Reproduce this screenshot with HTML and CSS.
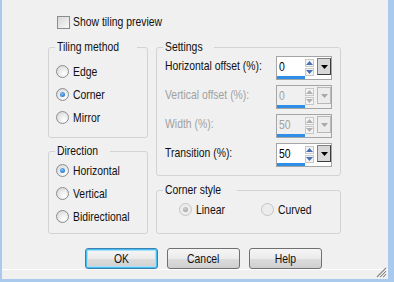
FILE: index.html
```html
<!DOCTYPE html>
<html>
<head>
<meta charset="utf-8">
<link rel="stylesheet" href="styles.css">
</head>
<body>
<div class="win">
  <div class="content">
    <div class="check"><span class="cbox"></span><span class="t">Show tiling preview</span></div>
    <div class="cols">
      <div class="left">
        <div class="group g-tiling">
          <div class="legend"><span class="t">Tiling method</span></div>
          <div class="radios r-tiling">
            <div class="radio"><span class="rb"></span><span class="t">Edge</span></div>
            <div class="radio"><span class="rb on"></span><span class="t">Corner</span></div>
            <div class="radio"><span class="rb"></span><span class="t">Mirror</span></div>
          </div>
        </div>
        <div class="group g-dir">
          <div class="legend"><span class="t">Direction</span></div>
          <div class="radios r-dir">
            <div class="radio"><span class="rb on"></span><span class="t">Horizontal</span></div>
            <div class="radio"><span class="rb"></span><span class="t">Vertical</span></div>
            <div class="radio"><span class="rb"></span><span class="t">Bidirectional</span></div>
          </div>
        </div>
      </div>
      <div class="right">
        <div class="group g-settings">
          <div class="legend"><span class="t">Settings</span></div>
          <div class="rows">
            <div class="row">
              <span class="lbl"><span class="t">Horizontal offset (%):</span></span>
              <div class="spin">
                <div class="spin-top">
                  <span class="val"><span class="t">0</span></span>
                  <span class="arrows"><span class="ab"><svg width="7" height="4" viewBox="0 0 7 4"><path d="M3.5 0L7 4H0z" fill="#4a6fb5"/></svg></span><span class="ab"><svg width="7" height="4" viewBox="0 0 7 4"><path d="M0 0H7L3.5 4z" fill="#4a6fb5"/></svg></span></span>
                  <span class="drop"><svg width="7" height="4" viewBox="0 0 7 4"><path d="M0 0H7L3.5 4z" fill="#000"/></svg></span>
                </div>
                <span class="bar"></span>
              </div>
            </div>
            <div class="row dis">
              <span class="lbl"><span class="t">Vertical offset (%):</span></span>
              <div class="spin">
                <div class="spin-top">
                  <span class="val"><span class="t">0</span></span>
                  <span class="arrows"><span class="ab"><svg width="7" height="4" viewBox="0 0 7 4"><path d="M3.5 0L7 4H0z" fill="#b0b0b0"/></svg></span><span class="ab"><svg width="7" height="4" viewBox="0 0 7 4"><path d="M0 0H7L3.5 4z" fill="#b0b0b0"/></svg></span></span>
                  <span class="drop"><svg width="7" height="4" viewBox="0 0 7 4"><path d="M0 0H7L3.5 4z" fill="#a8a8a8"/></svg></span>
                </div>
                <span class="bar"></span>
              </div>
            </div>
            <div class="row dis">
              <span class="lbl"><span class="t">Width (%):</span></span>
              <div class="spin">
                <div class="spin-top">
                  <span class="val"><span class="t">50</span></span>
                  <span class="arrows"><span class="ab"><svg width="7" height="4" viewBox="0 0 7 4"><path d="M3.5 0L7 4H0z" fill="#b0b0b0"/></svg></span><span class="ab"><svg width="7" height="4" viewBox="0 0 7 4"><path d="M0 0H7L3.5 4z" fill="#b0b0b0"/></svg></span></span>
                  <span class="drop"><svg width="7" height="4" viewBox="0 0 7 4"><path d="M0 0H7L3.5 4z" fill="#a8a8a8"/></svg></span>
                </div>
                <span class="bar"></span>
              </div>
            </div>
            <div class="row">
              <span class="lbl"><span class="t">Transition (%):</span></span>
              <div class="spin">
                <div class="spin-top">
                  <span class="val"><span class="t">50</span></span>
                  <span class="arrows"><span class="ab"><svg width="7" height="4" viewBox="0 0 7 4"><path d="M3.5 0L7 4H0z" fill="#4a6fb5"/></svg></span><span class="ab"><svg width="7" height="4" viewBox="0 0 7 4"><path d="M0 0H7L3.5 4z" fill="#4a6fb5"/></svg></span></span>
                  <span class="drop"><svg width="7" height="4" viewBox="0 0 7 4"><path d="M0 0H7L3.5 4z" fill="#000"/></svg></span>
                </div>
                <span class="bar"></span>
              </div>
            </div>
          </div>
        </div>
        <div class="group g-corner">
          <div class="legend"><span class="t">Corner style</span></div>
          <div class="corner-radios">
            <div class="radio"><span class="rb dis on"></span><span class="t">Linear</span></div>
            <div class="radio"><span class="rb dis"></span><span class="t">Curved</span></div>
          </div>
        </div>
      </div>
    </div>
    <div class="buttons">
      <button class="btn def"><span class="t tc">OK</span></button>
      <button class="btn"><span class="t tc">Cancel</span></button>
      <button class="btn"><span class="t tc">Help</span></button>
    </div>
  </div>
  <div class="status">
    <svg class="grip" width="11" height="11" viewBox="0 0 11 11">
      <path d="M10 1L1 10M10 4L4 10M10 7L7 10" stroke="#8a8a8a" stroke-width="1.2"/>
      <path d="M11 2L2 11M11 5L5 11M11 8L8 11" stroke="#ffffff" stroke-width="0.8"/>
    </svg>
  </div>
</div>
</body>
</html>
```

FILE: styles.css
```css
html, body {
  margin: 0;
  padding: 0;
  background: #f0f0f0;
}
body {
  font-family: "Liberation Sans", Arial, sans-serif;
  font-size: 13px;
  color: #111;
}
.t {
  display: inline-block;
  white-space: nowrap;
  transform: scaleX(0.8);
  transform-origin: 0 50%;
}
.t.tc {
  transform-origin: 50% 50%;
}
.win {
  width: 394px;
  height: 282px;
  box-sizing: border-box;
  border-left: 2px solid #a9caed;
  border-right: 6px solid #a9caed;
  border-bottom: 3px solid #a9caed;
  display: flex;
  flex-direction: column;
  background: #f0f0f0;
}
.content {
  flex: 1;
  padding: 15px 0 0 46px;
}
.check {
  display: flex;
  align-items: center;
  gap: 3px;
  margin-left: 9px;
  height: 14px;
  line-height: 14px;
}
.cbox {
  width: 13px;
  height: 13px;
  box-sizing: border-box;
  border: 1px solid #8c8c8c;
  background: linear-gradient(135deg, #d8d8d8, #f8f8f8);
  flex: none;
}
.cols {
  display: flex;
  gap: 8px;
  margin-top: 18px;
}
.left {
  width: 100px;
  display: flex;
  flex-direction: column;
  gap: 13px;
}
.right {
  width: 185px;
  display: flex;
  flex-direction: column;
  gap: 14px;
}
.group {
  border: 1px solid #d3d3d3;
  border-radius: 3px;
  box-sizing: border-box;
}
.legend {
  width: fit-content;
  margin: -8px 0 0 6px;
  padding: 0 2px;
  background: #f0f0f0;
  line-height: 14px;
  height: 14px;
  overflow: hidden;
}
.legend .t {
  vertical-align: top;
}
.g-tiling { height: 91px; }
.g-dir { height: 83px; }
.g-settings { height: 129px; }
.g-corner { height: 44px; }
.radios {
  padding-left: 7px;
}
.r-tiling { padding-top: 6px; }
.r-dir { padding-top: 1px; }
.radio {
  display: flex;
  align-items: center;
  gap: 4px;
  height: 23px;
}
.rb {
  position: relative;
  width: 13px;
  height: 13px;
  box-sizing: border-box;
  border-radius: 50%;
  border: 1px solid #8a8d90;
  background: radial-gradient(circle at 65% 70%, #ffffff 0%, #f0f0f0 35%, #cfd1d3 100%);
  flex: none;
}
.rb.on::after {
  content: "";
  position: absolute;
  left: 3px;
  top: 3px;
  width: 5px;
  height: 5px;
  border-radius: 50%;
  background: radial-gradient(circle at 40% 35%, #7cc0f4, #1560b8);
}
.rb.dis {
  border-color: #c4c4c4;
  background: #ececec;
}
.rb.dis.on::after {
  background: radial-gradient(circle at 40% 35%, #d0d0d0, #9a9a9a);
}
.rows {
  padding: 2px 8px 0 8px;
  display: flex;
  flex-direction: column;
  gap: 5px;
}
.row {
  display: flex;
  align-items: flex-start;
  height: 24px;
}
.lbl {
  flex: 1;
  min-width: 0;
  line-height: 14px;
  padding-top: 3px;
}
.row.dis .lbl, .row.dis .val {
  color: #a0a0a0;
}
.spin {
  flex: none;
  width: 56px;
  height: 24px;
  box-sizing: border-box;
  border: 1px solid #a5a5a5;
  background: #fff;
  display: flex;
  flex-direction: column;
}
.row.dis .spin {
  background: #f0f0f0;
}
.spin-top {
  display: flex;
  height: 19px;
}
.val {
  width: 27px;
  padding-left: 2px;
  line-height: 17px;
  padding-top: 1px;
  color: #000;
}
.arrows {
  display: flex;
  flex-direction: column;
  justify-content: center;
  gap: 1px;
  width: 10px;
  margin-top: 1px;
}
.ab {
  width: 9px;
  height: 8px;
  box-sizing: border-box;
  border: 1px solid #c8c8c8;
  background: #f4f4f4;
  display: flex;
  align-items: center;
  justify-content: center;
}
.drop {
  width: 14px;
  height: 17px;
  box-sizing: border-box;
  margin: 1px 0 0 2px;
  border: 1px solid #3c3c3c;
  border-top-color: #808080;
  border-left-color: #808080;
  background: #d8d8d8;
  display: flex;
  align-items: center;
  justify-content: center;
}
.row.dis .drop {
  border-color: #b8b8b8;
  background: #ececec;
}
.bar {
  display: block;
  width: 28px;
  height: 3px;
  margin-top: auto;
  background: #2f8ee8;
}
.corner-radios {
  display: flex;
  padding: 1px 0 0 22px;
}
.corner-radios .radio:first-child {
  width: 82px;
}
.buttons {
  display: flex;
  gap: 9px;
  margin: 14px 0 0 37px;
}
.btn {
  width: 73px;
  height: 21px;
  box-sizing: border-box;
  border: 1px solid #707070;
  border-radius: 3px;
  background: linear-gradient(#f6f6f6, #ebebeb 50%, #dddddd 50%, #cfcfcf);
  font-family: inherit;
  font-size: 13px;
  color: #111;
  padding: 0;
  line-height: 17px;
}
.btn.def {
  border-color: #3c7fb1;
  box-shadow: inset 0 0 0 1px #48bff0, inset 0 0 0 2px #a8e0f8;
}
.status {
  height: 9px;
  display: flex;
  justify-content: flex-end;
  align-items: flex-end;
  border-top: 1px solid #ffffff;
}
.grip {
  display: block;
  margin: 0 1px 1px 0;
}
```
